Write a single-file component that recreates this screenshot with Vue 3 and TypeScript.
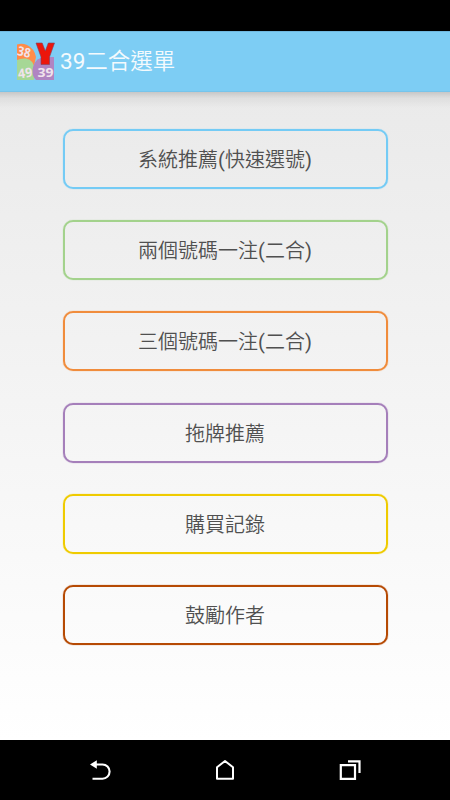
<script setup lang="ts">
interface MenuItem {
  label: string
  tone: string
}

const items: MenuItem[] = [
  { label: '系統推薦(快速選號)', tone: 'blue' },
  { label: '兩個號碼一注(二合)', tone: 'green' },
  { label: '三個號碼一注(二合)', tone: 'orange' },
  { label: '拖牌推薦', tone: 'purple' },
  { label: '購買記錄', tone: 'yellow' },
  { label: '鼓勵作者', tone: 'brown' },
]

// Parentheses are set in the regular Latin weight, the characters in a lighter one.
const parts = (label: string): string[] => label.split(/([()])/).filter(Boolean)
const isLatin = (part: string): boolean => part === '(' || part === ')'
</script>

<template>
  <div class="screen">
    <div class="status"></div>
    <header class="bar">
      <svg class="logo" viewBox="0 0 38 39" width="38" height="39">
        <path d="M0 2.500Q5 1 10 3Q17 6 19 15L17 24H0Z" fill="#ff8c49" />
        <path d="M0 18Q4 16 9 16.500Q17 18 18 28L17 38H0Z" fill="#a6d796" />
        <path d="M19 38Q15 34 15.500 28Q17 16 28 15H37V38Z" fill="#b085c2" />
        <g class="ball">
          <text x="0.800" y="14.500" transform="rotate(12 7 9)" textLength="13" lengthAdjust="spacingAndGlyphs">38</text>
          <text x="0.800" y="35.500" transform="rotate(-8 8 31)" textLength="14.500" lengthAdjust="spacingAndGlyphs">49</text>
          <text x="20.500" y="35" textLength="16" lengthAdjust="spacingAndGlyphs">39</text>
        </g>
        <path d="M19 1H25.200L28.300 9L31.300 1H37.500L32.500 15V22.500H24V15Z" fill="#ec160b" stroke="#813f5c" stroke-width=".6" />
      </svg>
      <h1 class="title"><span class="latin">39</span>二合選單</h1>
    </header>
    <main class="content">
      <button v-for="item in items" :key="item.label" class="choice" :class="item.tone">
        <span v-for="(part, i) in parts(item.label)" :key="i" :class="{ latin: isLatin(part) }">{{ part }}</span>
      </button>
    </main>
    <nav class="nav">
      <svg viewBox="0 0 24 24" width="24" height="24">
        <path d="M7 6.500H14.500A7.100 7.100 0 0 1 14.500 20.700H4.500" fill="none" stroke="#fff" stroke-width="2.100" />
        <path d="M2 6.500L8.800 2.200V10.800Z" fill="#fff" />
      </svg>
      <svg viewBox="0 0 24 24" width="24" height="24">
        <path d="M4 9.300L12 3L20 9.300V20.800H4Z" fill="none" stroke="#fff" stroke-width="2" stroke-linejoin="round" />
      </svg>
      <svg viewBox="0 0 24 24" width="24" height="24">
        <path d="M2.800 7.200H17V20.800H2.800ZM10 3.300H21.500V15" fill="none" stroke="#fff" stroke-width="2.200" />
      </svg>
    </nav>
  </div>
</template>

<style>
body {
  margin: 0;
  background: #000;
}
</style>

<style scoped>
.screen {
  display: flex;
  flex-direction: column;
  width: 450px;
  height: 800px;
  overflow: hidden;
  font-family: Roboto, 'Noto Sans CJK TC', sans-serif;
}
.status {
  height: 31px;
  background: #000;
}
.bar {
  display: flex;
  align-items: flex-start;
  gap: 5px;
  height: 61px;
  box-sizing: border-box;
  padding: 11px 0 0 17px;
  border-top: 1px solid #70b8df;
  border-bottom: 1px solid #76c4eb;
  background: #7dcdf4;
}
.logo {
  flex: none;
  margin-top: -1px;
  overflow: visible;
}
.ball {
  fill: #f0e3ec;
  font: bold 13px 'Noto Sans', sans-serif;
}
.title {
  margin: 0;
  color: #f4fafd;
  font-size: 22.500px;
  font-weight: 350;
  line-height: 37px;
}
.latin {
  font-weight: 400;
}
.content {
  display: flex;
  flex-direction: column;
  align-items: center;
  gap: 31.250px;
  height: 648px;
  box-sizing: border-box;
  padding-top: 36.800px;
  background:
    linear-gradient(rgba(0, 0, 0, 0.15), rgba(0, 0, 0, 0.05) 6px, transparent 16px),
    linear-gradient(#eaeaea, #fff);
}
.choice {
  flex: none;
  width: 325px;
  height: 60px;
  box-sizing: border-box;
  padding: 2px 0 0;
  border: 2px solid;
  border-radius: 10px;
  background: transparent;
  color: #505050;
  font-family: inherit;
  font-size: 20px;
  font-weight: 350;
  line-height: 28px;
}
.blue { border-color: #74cbf5; box-shadow: 0 0 1px #74cbf5; }
.green { border-color: #a3d28c; box-shadow: 0 0 1px #a3d28c; }
.orange { border-color: #f08c3c; box-shadow: 0 0 1px #f08c3c; }
.purple { border-color: #a57fba; box-shadow: 0 0 1px #a57fba; }
.yellow { border-color: #efcb00; box-shadow: 0 0 1px #efcb00; }
.brown { border-color: #b64a04; box-shadow: 0 0 1px #b64a04; }
.nav {
  display: flex;
  align-items: center;
  justify-content: center;
  gap: 101px;
  height: 60px;
  background: #000;
}
</style>
